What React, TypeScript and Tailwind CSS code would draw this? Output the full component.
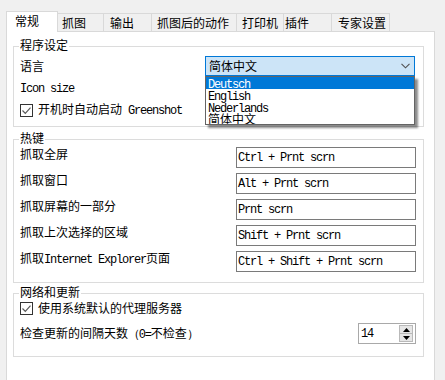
import React from "react";

const Mono = ({ children }: { children: React.ReactNode }) => (
  <span className="font-['Liberation_Mono'] text-[12px] tracking-[-1.2px] whitespace-pre">
    {children}
  </span>
);

const CheckBox = () => (
  <span className="w-[13px] h-[13px] border border-[#333333] bg-white flex items-center justify-center shrink-0">
    <svg width="11" height="11" viewBox="0 0 11 11">
      <path d="M1.5 5.5 L4.3 8.3 L9.5 2.6" fill="none" stroke="#5a5a5a" strokeWidth="1.2" />
    </svg>
  </span>
);

const Group = ({
  title,
  className,
  children,
}: {
  title: string;
  className: string;
  children: React.ReactNode;
}) => (
  <div className={`relative ml-[6px] w-[411px] border border-[#dcdcdc] ${className}`}>
    <div className="absolute top-[-9px] left-[5px] bg-white px-[1px] leading-[14px]">{title}</div>
    {children}
  </div>
);

const tabs = [
  { name: "抓图", w: "w-[46px] pl-[4px]" },
  { name: "输出", w: "w-[48px] pl-[6px]" },
  { name: "抓图后的动作", w: "w-[85px] pl-[5px]" },
  { name: "打印机", w: "w-[47px] pl-[5px]" },
  { name: "插件", w: "w-[48px] pl-[1px]" },
  { name: "专家设置", w: "w-[58px] pl-[6px]" },
];

const hotkeys = [
  { label: <>抓取全屏</>, value: "Ctrl + Prnt scrn" },
  { label: <>抓取窗口</>, value: "Alt + Prnt scrn" },
  { label: <>抓取屏幕的一部分</>, value: "Prnt scrn" },
  { label: <>抓取上次选择的区域</>, value: "Shift + Prnt scrn" },
  {
    label: (
      <>
        抓取<Mono>Internet Explorer</Mono>页面
      </>
    ),
    value: "Ctrl + Shift + Prnt scrn",
  },
];

export default function App() {
  return (
    <div className="w-[445px] h-[380px] overflow-hidden bg-[#f0f0f0] font-['Noto_Sans_CJK_SC',sans-serif] text-[12px] text-black relative">
      {/* tab strip */}
      <div className="flex items-end ml-[6px] pt-[11px] relative z-10">
        <div className="w-[52px] h-[21px] -mb-px bg-white border-t border-l border-r border-[#d9d9d9] pl-[8px] leading-[18px]">
          常规
        </div>
        {tabs.map((t) => (
          <div key={t.name} className={`h-[18px] border-t border-r border-[#d9d9d9] leading-[17px] ${t.w}`}>
            {t.name}
          </div>
        ))}
      </div>

      {/* panel */}
      <div className="ml-[6px] w-[429px] h-[360px] bg-white border border-[#d9d9d9] pt-[14px]">
        <Group title="程序设定" className="h-[81px]">
          <div className="flex items-center h-[20px] mt-[9px] pl-[6px]">
            <span className="leading-[14px]">语言</span>
            <div className="relative ml-auto mr-[8px] w-[210px] h-[20px] bg-[#cce4f7] border border-[#0078d7] flex items-center pl-[3px]">
              <span className="leading-[14px]">简体中文</span>
              <svg className="ml-auto mr-[4px]" width="9" height="6" viewBox="0 0 9 6">
                <path d="M0.5 0.8 L4.5 4.8 L8.5 0.8" fill="none" stroke="#505050" strokeWidth="1.1" />
              </svg>
              {/* open dropdown list */}
              <div className="absolute left-[-1px] top-[19px] w-[210px] h-[49px] bg-white border border-[#646464] shadow-[3px_3px_2px_rgba(0,0,0,0.45)] overflow-hidden">
                <div className="h-[12px] leading-[12px] bg-[#0078d7] text-white pl-[2px]">
                  <Mono>Deutsch</Mono>
                </div>
                <div className="h-[12px] leading-[12px] pl-[2px]">
                  <Mono>English</Mono>
                </div>
                <div className="h-[12px] leading-[12px] pl-[2px]">
                  <Mono>Nederlands</Mono>
                </div>
                <div className="h-[12px] leading-[12px] pl-[2px]">简体中文</div>
              </div>
            </div>
          </div>
          <div className="flex items-center h-[20px] mt-[3px] pl-[6px]">
            <Mono>Icon size</Mono>
          </div>
          <div className="flex items-center gap-[5px] h-[20px] mt-[1px] pl-[6px]">
            <CheckBox />
            <span className="leading-[14px]">
              开机时自动启动<Mono> Greenshot</Mono>
            </span>
          </div>
        </Group>

        <Group title="热键" className="h-[144px] mt-[12px]">
          <div className="flex flex-col gap-[5px] pt-[7px]">
            {hotkeys.map((h) => (
              <div key={h.value} className="flex items-start h-[21px] pl-[6px]">
                <span className="leading-[14px]">{h.label}</span>
                <div className="ml-auto mr-[7px] w-[180px] h-[21px] border border-[#7a7a7a] bg-white flex items-center pl-[1px]">
                  <Mono>{h.value}</Mono>
                </div>
              </div>
            ))}
          </div>
        </Group>

        <Group title="网络和更新" className="h-[64px] mt-[10px]">
          <div className="flex items-center gap-[5px] h-[16px] mt-[6px] pl-[6px]">
            <CheckBox />
            <span className="leading-[14px]">使用系统默认的代理服务器</span>
          </div>
          <div className="flex items-center h-[21px] mt-[7px] pl-[6px]">
            <span className="leading-[14px]">
              检查更新的间隔天数<Mono>（0=</Mono>不检查<Mono>）</Mono>
            </span>
            <div className="ml-auto mr-[7px] w-[58px] h-[21px] border border-[#a9a9a9] bg-white flex items-center pl-[2px]">
              <Mono>14</Mono>
              <div className="ml-auto mr-[2px] w-[14px] h-[17px] flex flex-col border border-[#b9b9b9] bg-[#e6e6e6]">
                <div className="flex-1 flex items-center justify-center border-b border-[#b9b9b9]">
                  <svg width="7" height="4" viewBox="0 0 7 4">
                    <path d="M0 4 L3.5 0 L7 4 Z" fill="#000" />
                  </svg>
                </div>
                <div className="flex-1 flex items-center justify-center">
                  <svg width="7" height="4" viewBox="0 0 7 4">
                    <path d="M0 0 L3.5 4 L7 0 Z" fill="#000" />
                  </svg>
                </div>
              </div>
            </div>
          </div>
        </Group>
      </div>
    </div>
  );
}
